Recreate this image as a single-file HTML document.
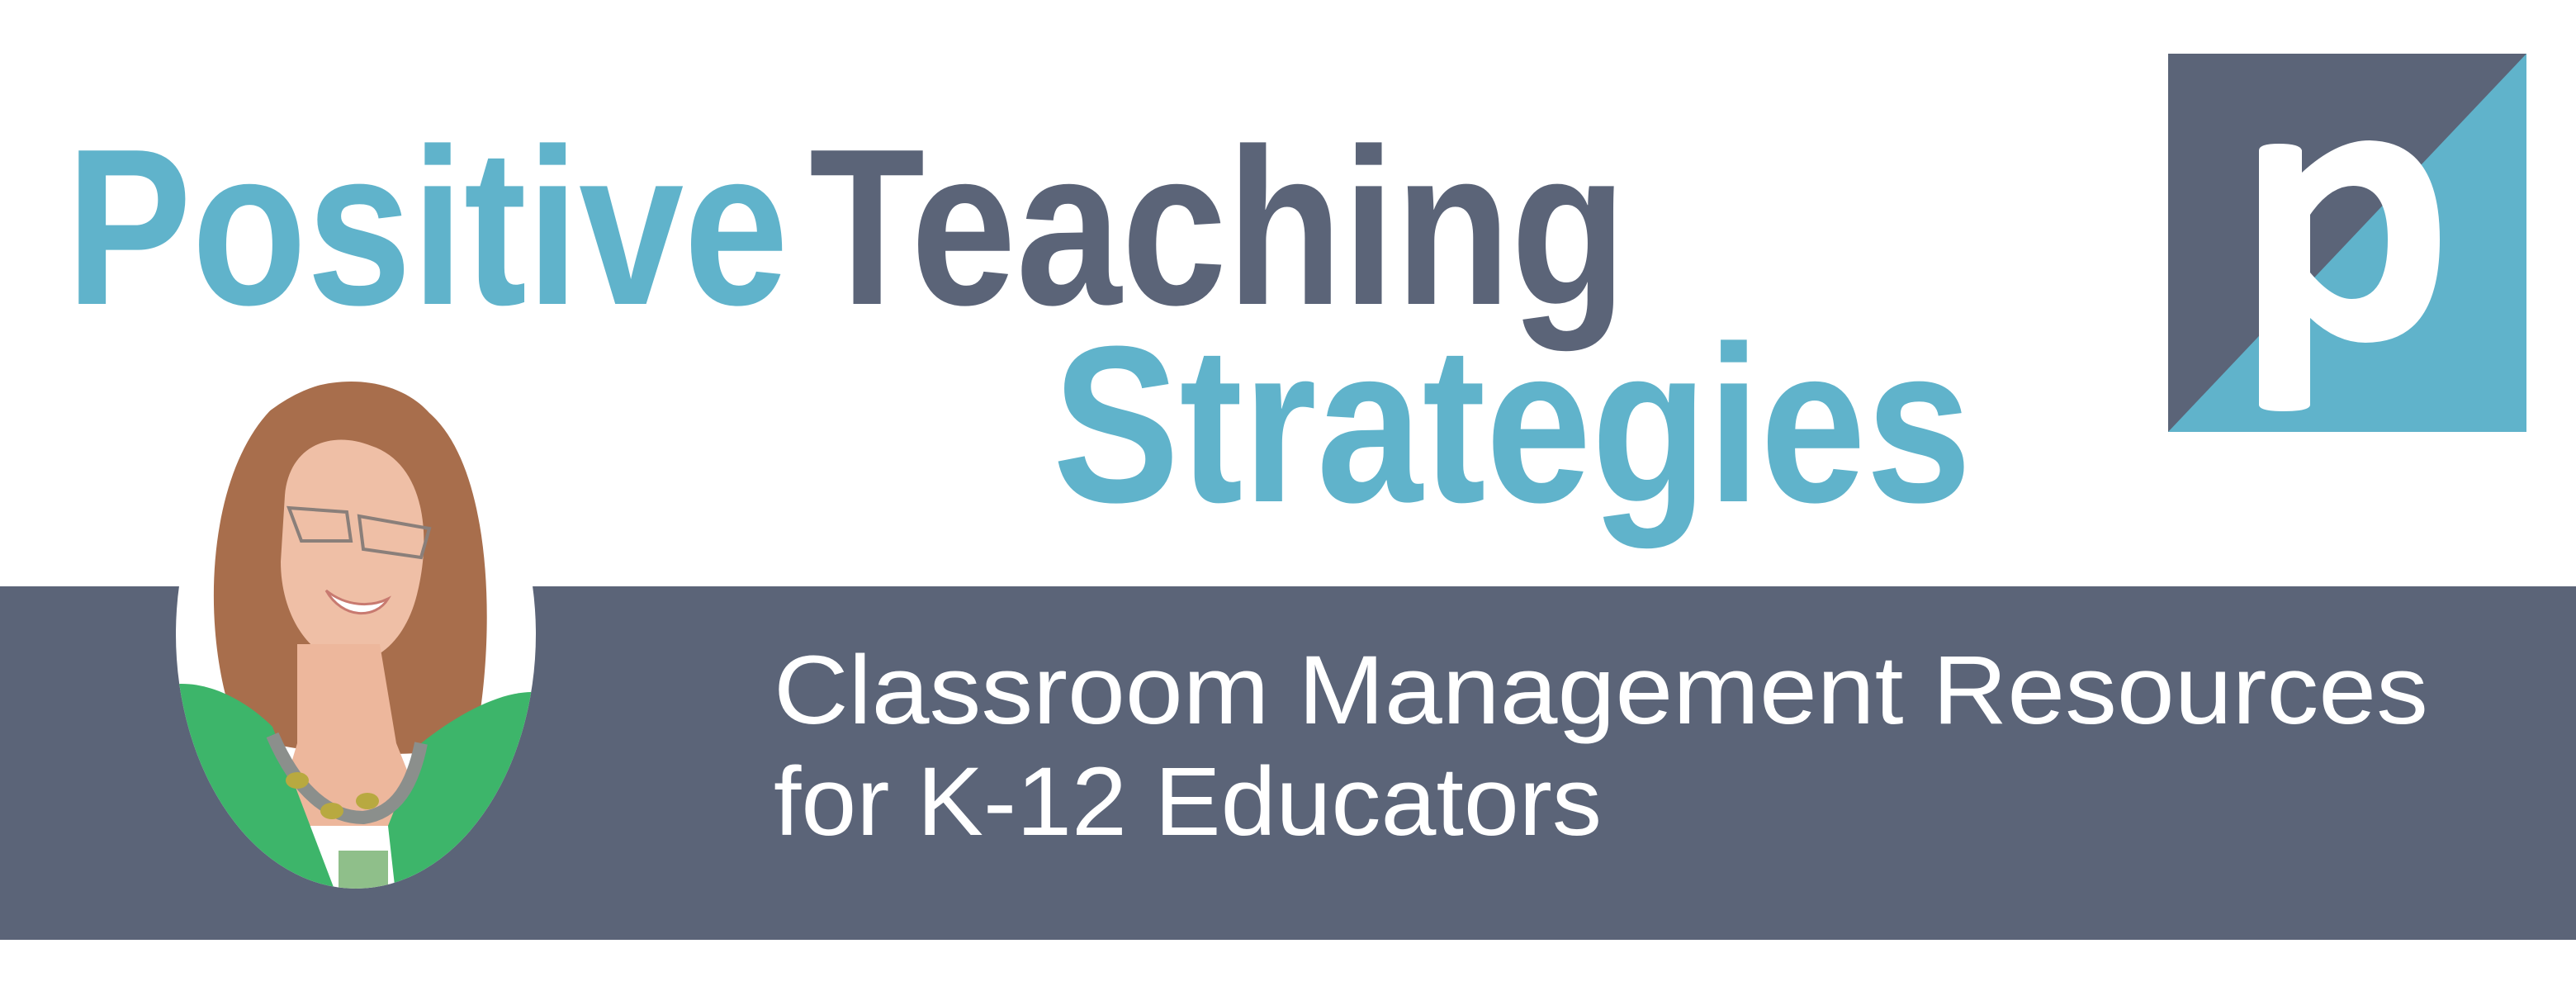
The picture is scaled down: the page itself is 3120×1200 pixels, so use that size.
<!DOCTYPE html>
<html><head><meta charset="utf-8"><style>
html,body{margin:0;padding:0;background:#fff;width:3120px;height:1200px;overflow:hidden}
svg{display:block}
</style></head><body>
<svg width="3120" height="1200" viewBox="0 0 3120 1200" xmlns="http://www.w3.org/2000/svg">
<rect width="3120" height="1200" fill="#fff"/>
<rect x="0" y="710" width="3120" height="428" fill="#5b6478"/>
<defs><clipPath id="ov"><ellipse cx="431" cy="768" rx="218" ry="308"/></clipPath></defs>
<g clip-path="url(#ov)">
<rect x="200" y="440" width="460" height="650" fill="#fff"/>
<path d="M285 880 C240 760 250 560 340 485 C400 450 480 455 520 500 C600 570 600 780 575 900 C540 920 320 920 285 880Z" fill="#a86e4c"/>
<path d="M345 600 C350 540 400 520 450 540 C510 560 525 640 505 720 C490 780 450 810 410 800 C370 790 340 740 340 680Z" fill="#efbfa6"/>
<path d="M360 780 L460 780 L480 900 L520 1000 L330 1000 L360 900Z" fill="#edb79c"/>
<path d="M350 615 L420 620 L425 655 L365 655Z M435 625 L520 640 L510 675 L440 665Z" fill="none" stroke="#8a7f7a" stroke-width="4"/>
<path d="M395 715 C420 735 450 735 470 725 C455 750 415 750 395 715Z" fill="#fff" stroke="#c87a70" stroke-width="3"/>
<path d="M200 830 C250 820 300 850 330 880 L410 1090 L200 1090Z" fill="#3db56a"/>
<path d="M660 840 C620 830 560 860 510 900 L470 1000 L480 1090 L660 1090Z" fill="#3db56a"/>
<path d="M330 890 C360 960 400 990 440 990 C480 985 500 950 510 900" fill="none" stroke="#8b8f8c" stroke-width="16"/>
<ellipse cx="360" cy="945" rx="14" ry="10" fill="#b8a940"/>
<ellipse cx="402" cy="982" rx="14" ry="10" fill="#b8a940"/>
<ellipse cx="445" cy="970" rx="14" ry="10" fill="#b8a940"/>
<rect x="410" y="1030" width="60" height="60" fill="#8fbf8a"/>
</g>
<g font-family="'Liberation Sans',sans-serif" font-weight="bold">
<text x="80" y="368" font-size="270" fill="#60b3cb" textLength="875" lengthAdjust="spacingAndGlyphs">Positive</text>
<text x="980" y="368" font-size="270" fill="#5b6478" textLength="990" lengthAdjust="spacingAndGlyphs">Teaching</text>
<text x="1275" y="607" font-size="270" fill="#60b3cb" textLength="1113" lengthAdjust="spacingAndGlyphs">Strategies</text>
</g>
<g font-family="'Liberation Sans',sans-serif" fill="#fff">
<text x="937" y="876" font-size="118" textLength="2004" lengthAdjust="spacingAndGlyphs">Classroom Management Resources</text>
<text x="937" y="1011" font-size="118" textLength="1003" lengthAdjust="spacingAndGlyphs">for K-12 Educators</text>
</g>
<rect x="2626" y="65" width="434" height="458" fill="#5b6478"/>
<polygon points="3060,65 3060,523 2626,523" fill="#60b3cb"/>
<path d="M2736 182 Q2736 174 2760 174 Q2786 174 2788 182 L2788 209 Q2830 170 2870 170 Q2955 172 2955 290 Q2955 415 2865 415 Q2830 415 2798 385 L2798 490 Q2798 498 2766 498 Q2736 498 2736 490Z M2798 260 L2798 330 Q2825 362 2848 362 Q2892 362 2892 290 Q2892 225 2850 225 Q2822 225 2798 260Z" fill="#fff" fill-rule="evenodd"/>
</svg>
</body></html>
